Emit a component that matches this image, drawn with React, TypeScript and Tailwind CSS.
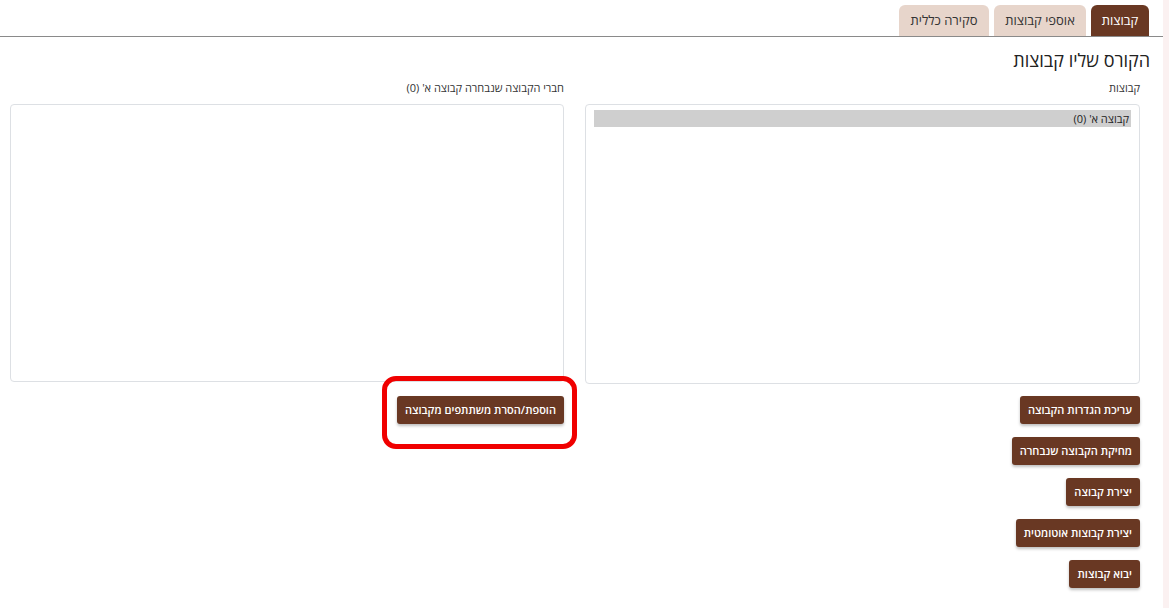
const brown = "bg-[#693823]";

const groupActions = [
  "עריכת הגדרות הקבוצה",
  "מחיקת הקבוצה שנבחרה",
  "יצירת קבוצה",
  "יצירת קבוצות אוטומטית",
  "יבוא קבוצות",
];

function ActionButton({ label }: { label: string }) {
  return (
    <button
      className={`${brown} h-[28px] rounded-[3px] px-[8px] text-[11px] font-semibold text-white shadow-[0_2px_3px_rgba(0,0,0,0.25)]`}
    >
      {label}
    </button>
  );
}

export default function App() {
  return (
    <div
      dir="rtl"
      className="flex h-[608px] w-[1169px] bg-white text-[#333]"
      style={{ fontFamily: '"Open Sans", "Liberation Sans", "DejaVu Sans", sans-serif' }}
    >
      <div className="w-[6px] bg-[#fbf1f1]" />
      <div className="flex-1">
        {/* Tabs */}
        <div className="flex items-end gap-[5px] border-b border-[#8a8a8a] pr-[14px] pt-[5px]">
          <div className={`${brown} flex h-[31px] w-[58px] items-center justify-center rounded-t-[6px] text-[13px] text-white`}>
            קבוצות
          </div>
          <div className="flex h-[31px] w-[92px] items-center justify-center rounded-t-[6px] bg-[#e7d5cb] text-[13px] text-[#333]">
            אוספי קבוצות
          </div>
          <div className="flex h-[31px] w-[90px] items-center justify-center rounded-t-[6px] bg-[#e7d5cb] text-[13px] text-[#333]">
            סקירה כללית
          </div>
        </div>

        <h2 className="mt-[11px] pr-[13px] text-[18px] leading-[24px] text-[#222]">הקורס שליו קבוצות</h2>

        <div className="mt-[9px] grid grid-cols-[555px_554px] gap-[21px] pr-[23px]">
          {/* Groups list + actions */}
          <div>
            <div className="mb-[9px] text-[11px] leading-[14px]">קבוצות</div>
            <div className="h-[280px] rounded-[4px] border border-[#dde0e4] px-[8px] pt-[5px]">
              <div className="h-[17px] bg-[#cfcfcf] pr-[2px] text-[11px] leading-[17px] text-[#222]">קבוצה א' (0)</div>
            </div>
            <div className="mt-[12px] flex flex-col items-start gap-[13px]">
              {groupActions.map((a) => (
                <ActionButton key={a} label={a} />
              ))}
            </div>
          </div>

          {/* Members of the selected group */}
          <div>
            <div className="mb-[9px] text-[11px] leading-[14px]">חברי הקבוצה שנבחרה קבוצה א' (0)</div>
            <div className="h-[278px] rounded-[4px] border border-[#dde0e4]" />
            <div className="mt-[14px] flex">
              <div className="relative">
                <ActionButton label="הוספת/הסרת משתתפים מקבוצה" />
                <div className="pointer-events-none absolute -bottom-[25px] -left-[15px] -right-[13px] -top-[20px] rounded-[14px] border-[5px] border-[#f00000]" />
              </div>
            </div>
          </div>
        </div>
      </div>
    </div>
  );
}
